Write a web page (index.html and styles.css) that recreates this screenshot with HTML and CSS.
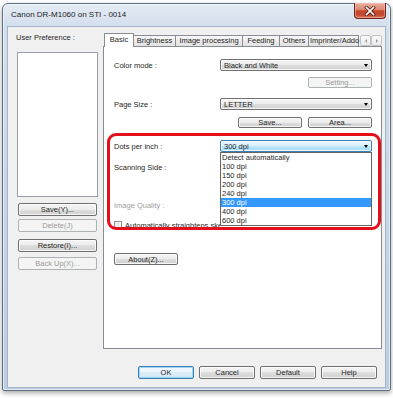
FILE: index.html
```html
<!DOCTYPE html>
<html>
<head>
<meta charset="utf-8">
<link rel="stylesheet" href="styles.css">
</head>
<body>
<div class="window">
  <div class="titlebar">
    <span class="title">Canon DR-M1060 on STI - 0014</span>
    <div class="close">
      <svg width="12" height="10" viewBox="0 0 12 10"><path d="M2.5 1.5 L9.5 8.5 M9.5 1.5 L2.5 8.5" stroke="#5a1a10" stroke-width="3.2" stroke-linecap="square" fill="none"/><path d="M2.5 1.5 L9.5 8.5 M9.5 1.5 L2.5 8.5" stroke="#fff" stroke-width="1.7" stroke-linecap="square" fill="none"/></svg>
    </div>
  </div>
  <div class="client">
    <div class="main">
      <div class="left">
        <div class="lbl">User Preference :</div>
        <div class="listbox"></div>
        <div class="btn side s1">Save(Y)...</div>
        <div class="btn side dis s2">Delete(J)</div>
        <div class="btn side s3">Restore(I)...</div>
        <div class="btn side dis s4">Back Up(X)...</div>
      </div>
      <div class="tabctl">
        <div class="tabrow">
          <div class="tab sel t1">Basic</div>
          <div class="tab t2">Brightness</div>
          <div class="tab t3">Image processing</div>
          <div class="tab t4">Feeding</div>
          <div class="tab t5">Others</div>
          <div class="tab t6">Imprinter/Addo</div>
          <div class="scroll">
            <div class="arrbtn"><span class="tri-l"></span></div>
            <div class="arrbtn"><span class="tri-r"></span></div>
          </div>
        </div>
        <div class="panel">
          <div class="row r1"><span class="label">Color mode :</span><div class="combo"><span class="ctext">Black and White</span><span class="down"></span></div></div>
          <div class="row r2 end"><div class="btn dis w64">Setting...</div></div>
          <div class="row r3"><span class="label">Page Size :</span><div class="combo"><span class="ctext">LETTER</span><span class="down"></span></div></div>
          <div class="row r4 end"><div class="btn w64">Save...</div><div class="btn w64">Area...</div></div>
          <div class="row r5"><span class="label">Dots per inch :</span><div class="combo focus"><span class="ctext">300 dpi</span><span class="down"></span></div></div>
          <div class="row r6"><span class="label">Scanning Side :</span></div>
          <div class="row r7"><span class="label gray">Image Quality :</span></div>
          <div class="row r8"><span class="chk"></span><span class="nowrap">Automatically straightens ske</span></div>
          <div class="row r9"><div class="btn w64">About(Z)...</div></div>

          <div class="popup">
            <div class="item">Detect automatically</div>
            <div class="item">100 dpi</div>
            <div class="item">150 dpi</div>
            <div class="item">200 dpi</div>
            <div class="item">240 dpi</div>
            <div class="item hi">300 dpi</div>
            <div class="item">400 dpi</div>
            <div class="item">600 dpi</div>
          </div>
          <div class="redbox"></div>
        </div>
      </div>
    </div>
    <div class="footer">
      <div class="btn fb def">OK</div>
      <div class="btn fb">Cancel</div>
      <div class="btn fb">Default</div>
      <div class="btn fb">Help</div>
    </div>
  </div>
</div>
</body>
</html>
```

FILE: styles.css
```css
* { box-sizing: border-box; margin: 0; padding: 0; }
html, body { width: 393px; height: 398px; overflow: hidden; }
body {
  background: #ffffff;
  font-family: "Liberation Sans", Arial, sans-serif;
  font-size: 7.5px;
  line-height: 9px;
  color: #262626;
}
.window {
  margin: 3px 0 0 2px;
  width: 389px;
  height: 388px;
  display: flex;
  flex-direction: column;
  border: 1px solid #5f6f82;
  border-radius: 6px 6px 2px 2px;
  background: linear-gradient(180deg, #e4ecf5 0, #d3dfec 22px, #c4d4e6 60%, #bccde2 100%);
  box-shadow: 0 2px 5px rgba(0,0,0,.35), inset 0 0 0 1px rgba(255,255,255,.55);
}
.titlebar {
  height: 23px;
  display: flex;
  align-items: flex-start;
}
.title {
  margin: 6px 0 0 8px;
  font-size: 8px;
  line-height: 10px;
  color: #1e1e1e;
}
.close {
  margin: -1px 4px 0 auto;
  width: 32px;
  height: 16px;
  border: 1px solid #6b2a1e;
  border-top: none;
  border-radius: 0 0 4px 4px;
  background: linear-gradient(180deg, #eab0a2 0, #dd8570 45%, #c8462b 52%, #c44a2f 80%, #d97a5f 100%);
  display: flex;
  align-items: center;
  justify-content: center;
  box-shadow: inset 0 0 0 1px rgba(255,200,190,.45);
}
.client {
  height: 360px;
  margin: 0 5px;
  background: #f0f0f0;
  box-shadow: 0 0 0 1px #a4b5c9;
  display: flex;
  flex-direction: column;
}
.main {
  display: flex;
  padding-top: 6px;
  height: 322px;
}
.left {
  width: 95px;
  padding-left: 9px;
  display: flex;
  flex-direction: column;
}
.lbl { height: 10px; line-height: 10px; margin-left: -1px; }
.listbox {
  margin-top: 9px;
  width: 81px;
  height: 145px;
  border: 1px solid #9a9ea6;
  background: #fff;
}
.btn {
  display: flex;
  align-items: center;
  justify-content: center;
  height: 100%;
  border: 1px solid #707070;
  border-radius: 2px;
  background: linear-gradient(180deg, #f4f4f4 0, #ececec 50%, #dedede 50%, #d0d0d0 100%);
  box-shadow: inset 0 0 0 1px rgba(255,255,255,.75);
  white-space: nowrap;
}
.btn.dis {
  border-color: #adb2b5;
  background: #f4f4f4;
  color: #9a9a9a;
  box-shadow: none;
}
.side { width: 79px; height: 13px; margin-left: 1px; }
.s1 { margin-top: 6px; }
.s2 { margin-top: 3px; }
.s3 { margin-top: 7px; }
.s4 { margin-top: 5px; }

.tabctl {
  width: 279px;
  height: 316px;
  display: flex;
  flex-direction: column;
}
.tabrow {
  display: flex;
  align-items: flex-end;
  height: 14px;
  margin-bottom: -1px;
  padding-left: 1px;
  position: relative;
  z-index: 1;
}
.tab {
  height: 11px;
  margin-bottom: 1px;
  margin-left: -1px;
  border: 1px solid #898c95;
  border-bottom: none;
  border-radius: 1px 1px 0 0;
  background: linear-gradient(180deg, #f8f8f8 0, #ececec 50%, #e2e2e2 100%);
  text-align: center;
  line-height: 9px;
  white-space: nowrap;
}
.tab.sel {
  height: 14px;
  margin-bottom: 0;
  background: #fff;
  position: relative;
  z-index: 2;
  line-height: 11px;
}
.t1 { width: 30px; margin-left: 0; }
.t2 { width: 43px; }
.t3 { width: 68px; }
.t4 { width: 38px; }
.t5 { width: 30px; }
.t6 { width: 51px; text-align: left; padding-left: 1px; }
.scroll {
  display: flex;
  margin-left: 1px;
  margin-bottom: 1px;
}
.arrbtn {
  width: 11px;
  height: 11px;
  border: 1px solid #c3c3c3;
  border-radius: 2px;
  background: linear-gradient(180deg, #fafafa, #ebebeb);
  display: flex;
  align-items: center;
  justify-content: center;
}
.tri-l { border-top: 2px solid transparent; border-bottom: 2px solid transparent; border-right: 2px solid #9a9a9a; }
.tri-r { border-top: 2px solid transparent; border-bottom: 2px solid transparent; border-left: 2px solid #9a9a9a; }

.panel {
  flex: 1;
  border: 1px solid #898c95;
  background: #fff;
  position: relative;
  padding: 0 9px 0 10px;
  display: flex;
  flex-direction: column;
}
.row { display: flex; align-items: center; }
.row.end { justify-content: flex-end; gap: 6px; }
.r1 { margin-top: 12px; height: 12px; }
.r2 { margin-top: 6px; height: 11px; }
.r3 { margin-top: 10px; height: 12px; }
.r4 { margin-top: 7px; height: 11px; }
.r5 { margin-top: 12px; height: 12px; }
.r6 { margin-top: 10px; height: 10px; }
.r7 { margin-top: 28px; height: 10px; }
.r8 { margin-top: 10px; height: 10px; }
.r9 { margin-top: 23px; height: 12px; }
.label { width: 106px; white-space: nowrap; }
.label.gray { color: #a0a0a0; }
.w64 { width: 64px; }
.combo {
  width: 152px;
  height: 100%;
  display: flex;
  align-items: center;
  padding-left: 3px;
  border: 1px solid #707070;
  border-radius: 2px;
  background: linear-gradient(180deg, #f4f4f4 0, #ececec 50%, #dedede 50%, #d0d0d0 100%);
  box-shadow: inset 0 0 0 1px rgba(255,255,255,.75);
}
.combo.focus {
  border-color: #3c7fb1;
  background: linear-gradient(180deg, #eaf6fd 0, #d9f0fc 50%, #bee6fd 50%, #a7d9f5 100%);
}
.ctext { white-space: nowrap; }
.down {
  margin-left: auto;
  margin-right: 3px;
  border-left: 2.5px solid transparent;
  border-right: 2.5px solid transparent;
  border-top: 3px solid #000;
}
.chk {
  width: 8px;
  height: 8px;
  margin-right: 3px;
  border: 1px solid #8e8f8f;
  background: linear-gradient(135deg, #dcdcdc, #fafafa);
  box-shadow: inset 0 0 0 1px #f4f4f4;
}
.nowrap { white-space: nowrap; }

.popup {
  position: absolute;
  left: 116px;
  top: 105px;
  width: 152px;
  height: 74px;
  border: 1px solid #646464;
  background: #fff;
  z-index: 3;
}
.item {
  height: 9px;
  line-height: 9px;
  padding-left: 1px;
  white-space: nowrap;
}
.item.hi { background: #3399ff; color: #fff; }
.redbox {
  position: absolute;
  left: 3px;
  top: 86px;
  width: 274px;
  height: 97px;
  border: 3px solid #e3101c;
  border-radius: 9px;
  z-index: 4;
}
.footer {
  display: flex;
  justify-content: flex-end;
  gap: 5px;
  margin-top: 17px;
  padding-right: 8px;
  height: 13px;
}
.fb { width: 56px; height: 13px; }
.btn.def {
  border-color: #3c7fb1;
  box-shadow: inset 0 0 0 1px #9ad6f6;
  background: linear-gradient(180deg, #f2f9fd 0, #eaf5fb 50%, #dcedf7 50%, #d2e8f5 100%);
}
```
